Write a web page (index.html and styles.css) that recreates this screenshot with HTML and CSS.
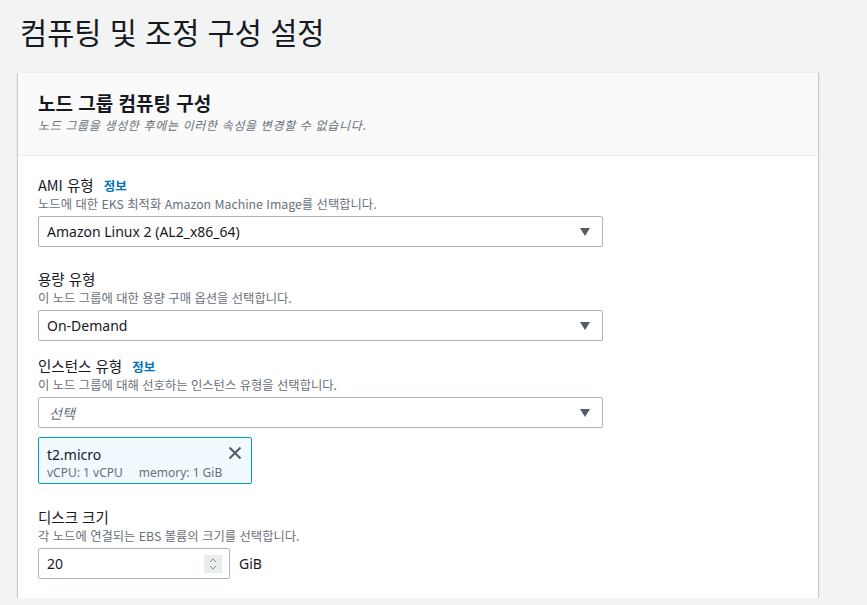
FILE: index.html
```html
<!DOCTYPE html>
<html lang="ko">
<head>
<meta charset="utf-8">
<title>컴퓨팅 및 조정 구성 설정</title>
<link rel="stylesheet" href="styles.css">
</head>
<body>
<h1 class="page-title">컴퓨팅 및 조정 구성 설정</h1>
<section class="card">
  <header class="card-header">
    <h2 class="card-title">노드 그룹 컴퓨팅 구성</h2>
    <p class="card-sub">노드 그룹을 생성한 후에는 이러한 속성을 변경할 수 없습니다.</p>
  </header>
  <div class="card-body">
    <div class="field field-1">
      <div class="label">AMI 유형 <a class="info">정보</a></div>
      <div class="desc">노드에 대한 EKS 최적화 Amazon Machine Image를 선택합니다.</div>
      <div class="select"><span class="value">Amazon Linux 2 (AL2_x86_64)</span><span class="caret"></span></div>
    </div>
    <div class="field field-2">
      <div class="label">용량 유형</div>
      <div class="desc">이 노드 그룹에 대한 용량 구매 옵션을 선택합니다.</div>
      <div class="select"><span class="value">On-Demand</span><span class="caret"></span></div>
    </div>
    <div class="field field-3">
      <div class="label">인스턴스 유형 <a class="info">정보</a></div>
      <div class="desc">이 노드 그룹에 대해 선호하는 인스턴스 유형을 선택합니다.</div>
      <div class="select"><span class="placeholder">선택</span><span class="caret"></span></div>
      <div class="chip">
        <div class="chip-text">
          <div class="chip-name">t2.micro</div>
          <div class="chip-meta"><span>vCPU: 1 vCPU</span><span>memory: 1 GiB</span></div>
        </div>
        <svg class="chip-x" width="14" height="14" viewBox="0 0 14 14"><path d="M1.5 1.5 L12.5 12.5 M12.5 1.5 L1.5 12.5" stroke="#545b64" stroke-width="2" fill="none"/></svg>
      </div>
    </div>
    <div class="field field-4">
      <div class="label">디스크 크기</div>
      <div class="desc">각 노드에 연결되는 EBS 볼륨의 크기를 선택합니다.</div>
      <div class="input-row">
        <div class="number"><span class="value">20</span>
          <span class="spin"><svg width="14" height="18" viewBox="0 0 14 18"><path d="M4 7 L7 4 L10 7 M4 11 L7 14 L10 11" stroke="#879196" stroke-width="1" fill="none"/></svg></span>
        </div>
        <span class="unit">GiB</span>
      </div>
    </div>
  </div>
</section>
</body>
</html>
```

FILE: styles.css
```css
html, body {
  margin: 0;
  padding: 0;
  background: #f2f3f3;
  font-family: "Noto Sans", "Noto Sans CJK KR", sans-serif;
  color: #16191f;
}
.page-title {
  margin: 0;
  padding: 11px 0 0 20px;
  height: 72px;
  box-sizing: border-box;
  font-size: 29.5px;
  line-height: 40px;
  font-weight: 400;
  letter-spacing: 0;
  font-family: "Noto Sans CJK KR", sans-serif;
}
.card {
  margin-left: 18px;
  width: 800px;
  background: #fff;
  border-top: 1px solid #eaeded;
  box-shadow: 0 1px 1px 0 rgba(0,28,36,.3), 1px 1px 1px 0 rgba(0,28,36,.15), -1px 1px 1px 0 rgba(0,28,36,.15);
}
.card-header {
  background: #fafafa;
  border-bottom: 1px solid #eaeded;
  padding: 18px 20px 0;
  height: 83px;
  box-sizing: border-box;
}
.card-title {
  margin: 0;
  font-size: 19px;
  line-height: 24px;
  font-weight: 700;
  font-family: "Noto Sans CJK KR", sans-serif;
  letter-spacing: 0;
}
.card-sub {
  margin: 2px 0 0;
  font-size: 12px;
  line-height: 16px;
  font-style: italic;
  color: #687078;
  letter-spacing: 0.65px;
  font-family: "Noto Sans CJK KR", sans-serif;
}
.card-body {
  padding: 18px 20px 19px;
}
.label {
  font-size: 14.5px;
  line-height: 22px;
  height: 22px;
  font-family: "Noto Sans CJK KR", sans-serif;
}
.info {
  color: #0073bb;
  font-size: 12.5px;
  font-weight: 700;
  margin-left: 6px;
}
.desc {
  font-size: 12.3px;
  line-height: 16px;
  color: #687078;
  font-family: "Noto Sans CJK KR", sans-serif;
}
.select {
  margin-top: 4px;
  width: 565px;
  height: 31px;
  box-sizing: border-box;
  border: 1px solid #aab7b8;
  border-radius: 2px;
  background: #fff;
  display: flex;
  align-items: center;
  justify-content: space-between;
  padding: 0 12px 0 8px;
  font-size: 14px;
}
.placeholder {
  color: #687078;
  font-style: italic;
  font-family: "Noto Sans CJK KR", sans-serif;
  padding-left: 2px;
}
.caret {
  width: 0;
  height: 0;
  border-left: 5px solid transparent;
  border-right: 5px solid transparent;
  border-top: 8px solid #545b64;
}
.field-1 { margin-bottom: 21px; }
.field-2 { margin-bottom: 14px; }
.field-3 { margin-bottom: 22px; }
.chip {
  margin-top: 9px;
  width: 214px;
  height: 47px;
  box-sizing: border-box;
  border: 1px solid #00a1c9;
  border-radius: 2px;
  background: #f1faff;
  display: flex;
  justify-content: space-between;
  align-items: flex-start;
  padding: 7px 9px 0 8px;
}
.chip-name {
  font-size: 14px;
  line-height: 20px;
}
.chip-meta {
  font-size: 12px;
  line-height: 16px;
  color: #687078;
  display: flex;
  gap: 16px;
}
.chip-x { margin-top: 1px; }
.input-row {
  margin-top: 4px;
  display: flex;
  align-items: center;
  gap: 9px;
}
.number {
  width: 192px;
  height: 31px;
  box-sizing: border-box;
  border: 1px solid #aab7b8;
  border-radius: 2px;
  background: #fff;
  display: flex;
  align-items: center;
  justify-content: space-between;
  padding: 0 7px 0 8px;
  font-size: 14px;
}
.spin {
  width: 18px;
  height: 18px;
  background: #eaeded;
  display: flex;
  align-items: center;
  justify-content: center;
}
.unit { font-size: 14px; }
```
